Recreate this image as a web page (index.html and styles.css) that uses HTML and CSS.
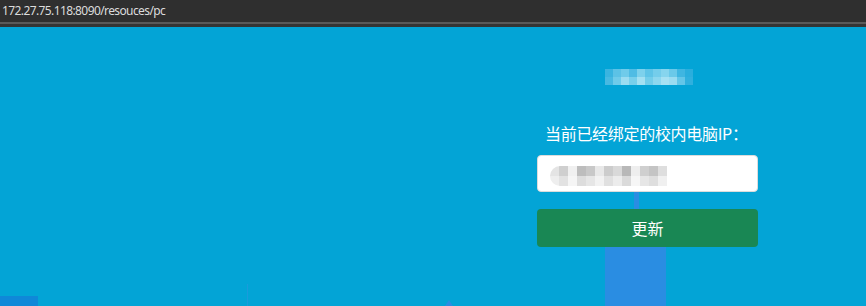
FILE: index.html
```html
<!DOCTYPE html>
<html lang="zh-CN">
<head>
<meta charset="utf-8">
<title>resouces/pc</title>
<link rel="stylesheet" href="styles.css">
</head>
<body>
<header class="topbar">
  <span class="url">172.27.75.118:8090/resouces/pc</span>
</header>
<div class="topbar-line"></div>
<main class="stage">
  <div class="deco deco-bar"></div>
  <div class="deco deco-thin"></div>
  <div class="deco deco-corner"></div>
  <div class="deco deco-line"></div>
  <div class="deco deco-tri"></div>

  <section class="panel">
    <div class="mosaic title-mosaic" aria-hidden="true">
      <i style="background:#3ab4e0"></i><i style="background:#5cc2e6"></i><i style="background:#6fcbea"></i><i style="background:#4fbce4"></i><i style="background:#7dd1ec"></i><i style="background:#5fc4e7"></i><i style="background:#74cdeb"></i><i style="background:#86d5ee"></i><i style="background:#6ac9e9"></i><i style="background:#3fb6e1"></i><i style="background:#2aaedd"></i>
      <i style="background:#47b9e2"></i><i style="background:#6fcbea"></i><i style="background:#9bdcf1"></i><i style="background:#78cfeb"></i><i style="background:#a3e0f2"></i><i style="background:#72cdea"></i><i style="background:#8cd7ef"></i><i style="background:#a6e1f3"></i><i style="background:#9adcf1"></i><i style="background:#63c6e8"></i><i style="background:#2fb0de"></i>
    </div>
    <label class="label" for="ip">当前已经绑定的校内电脑IP：</label>
    <div class="field" id="ip">
      <div class="mosaic ip-mosaic" aria-hidden="true">
        <i style="background:#e4e4e4"></i><i style="background:#cfcfcf"></i><i style="background:#f0f0f0"></i><i style="background:#bdbdbd"></i><i style="background:#c8c8c8"></i><i style="background:#e8e8e8"></i><i style="background:#cccccc"></i><i style="background:#d9d9d9"></i><i style="background:#b8b8b8"></i><i style="background:#eeeeee"></i><i style="background:#cfcfcf"></i><i style="background:#c4c4c4"></i><i style="background:#dedede"></i>
        <i style="background:#eeeeee"></i><i style="background:#e2e2e2"></i><i style="background:#f5f5f5"></i><i style="background:#dddddd"></i><i style="background:#e6e6e6"></i><i style="background:#f2f2f2"></i><i style="background:#e0e0e0"></i><i style="background:#ececec"></i><i style="background:#dadada"></i><i style="background:#f6f6f6"></i><i style="background:#e6e6e6"></i><i style="background:#dedede"></i><i style="background:#f0f0f0"></i>
      </div>
    </div>
    <button class="btn" type="button">更新</button>
  </section>
</main>
</body>
</html>
```
FILE: styles.css
```css
html, body {
  margin: 0;
  padding: 0;
  height: 100%;
  overflow: hidden;
}
body {
  background: #03a4d6;
  font-family: "Noto Sans CJK SC", "Noto Sans", sans-serif;
  display: flex;
  flex-direction: column;
}
.topbar {
  height: 22px;
  background: #2f2f2f;
  display: flex;
  align-items: center;
  padding-left: 2px;
}
.url {
  font-family: "Noto Sans", "Open Sans", sans-serif;
  font-size: 12px;
  color: #dcdcdc;
  letter-spacing: -0.6px;
  line-height: 1;
  margin-top: -1px;
}
.topbar-line {
  height: 2px;
  background: #5a5a5a;
  border-bottom: 3px solid #353535;
}
.stage {
  position: relative;
  flex: 1;
  display: flex;
  justify-content: flex-end;
  padding-right: 108px;
}
.deco {
  position: absolute;
  background: #2a8de2;
}
.deco-bar {
  left: 605px;
  width: 61px;
  top: 220px;
  bottom: 0;
}
.deco-thin {
  left: 634px;
  width: 5px;
  top: 160px;
  height: 30px;
}
.deco-corner {
  left: 0;
  width: 38px;
  height: 10px;
  bottom: 0;
  background: #0f88d8;
}
.deco-line {
  left: 247px;
  width: 1px;
  bottom: 0;
  height: 22px;
  background: #1b9bdb;
}
.deco-tri {
  left: 445px;
  bottom: 0;
  width: 0;
  height: 0;
  background: none;
  border-left: 4px solid transparent;
  border-right: 4px solid transparent;
  border-bottom: 6px solid #2a8de2;
}
.panel {
  position: relative;
  width: 221px;
  display: flex;
  flex-direction: column;
  padding-top: 41px;
}
.mosaic {
  display: grid;
}
.mosaic i {
  display: block;
}
.title-mosaic {
  align-self: center;
  margin-left: 2px;
  margin-top: 1px;
  grid-template-columns: repeat(11, 8px);
  grid-template-rows: repeat(2, 8px);
}
.label {
  margin-top: 36px;
  padding-left: 8px;
  color: #ffffff;
  font-size: 16px;
  line-height: 24px;
  height: 24px;
  letter-spacing: -0.3px;
}
.field {
  margin-top: 10px;
  height: 37px;
  box-sizing: border-box;
  background: #ffffff;
  border: 1px solid #dcdcdc;
  border-radius: 4px;
  display: flex;
  align-items: center;
  padding-left: 12px;
}
.ip-mosaic {
  grid-template-columns: repeat(13, 9px);
  grid-template-rows: repeat(2, 10px);
  border-radius: 10px 0 0 10px;
  overflow: hidden;
  margin-top: 4px;
}
.btn {
  margin-top: 17px;
  height: 38px;
  border: none;
  border-radius: 4px;
  background: #198754;
  color: #ffffff;
  font-family: "Noto Sans CJK SC", sans-serif;
  font-size: 16px;
  padding: 0;
  cursor: pointer;
}
```
